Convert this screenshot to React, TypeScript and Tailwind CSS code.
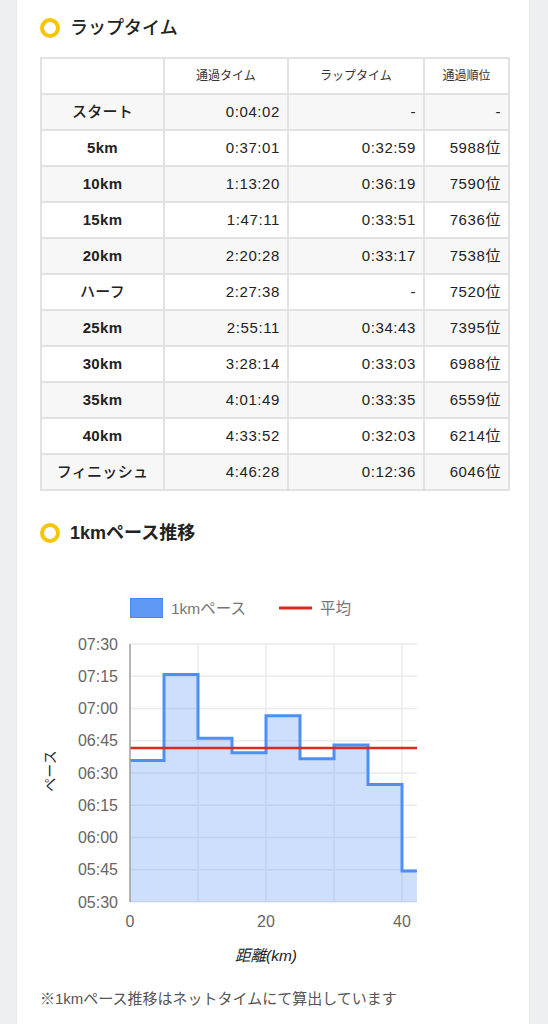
import React from 'react';

const rows: [string, string, string, string][] = [
  ['スタート', '0:04:02', '-', '-'],
  ['5km', '0:37:01', '0:32:59', '5988位'],
  ['10km', '1:13:20', '0:36:19', '7590位'],
  ['15km', '1:47:11', '0:33:51', '7636位'],
  ['20km', '2:20:28', '0:33:17', '7538位'],
  ['ハーフ', '2:27:38', '-', '7520位'],
  ['25km', '2:55:11', '0:34:43', '7395位'],
  ['30km', '3:28:14', '0:33:03', '6988位'],
  ['35km', '4:01:49', '0:33:35', '6559位'],
  ['40km', '4:33:52', '0:32:03', '6214位'],
  ['フィニッシュ', '4:46:28', '0:12:36', '6046位'],
];

// pace per km in seconds for each segment [startKm, endKm, sec]
const segments: [number, number, number][] = [
  [0, 5, 395.8],
  [5, 10, 435.8],
  [10, 15, 406.2],
  [15, 20, 399.4],
  [20, 25, 416.6],
  [25, 30, 396.6],
  [30, 35, 403],
  [35, 40, 384.6],
  [40, 42.195, 344.4],
];

const AVG = 401.6;
const X0 = 90;
const Y0 = 73;
const BOTTOM = 331;
const px = (km: number) => X0 + km * 6.8;
const py = (s: number) => Y0 + (450 - s) * 2.15;

const yTicks = ['07:30', '07:15', '07:00', '06:45', '06:30', '06:15', '06:00', '05:45', '05:30'];

function Ring() {
  return <span className="inline-block w-[20px] h-[20px] rounded-full border-[4px] border-[#f7c600] shrink-0" />;
}

function PaceChart() {
  let line = `M ${px(0)} ${py(segments[0][2])}`;
  segments.forEach(([a, b, s], i) => {
    if (i > 0) line += ` L ${px(a)} ${py(s)}`;
    line += ` L ${px(b)} ${py(s)}`;
  });
  const area = `${line} L ${px(42.195)} ${BOTTOM} L ${px(0)} ${BOTTOM} Z`;
  const font = '"Helvetica Neue", "Liberation Sans", "Noto Sans CJK JP", sans-serif';

  return (
    <svg width={468} height={400} className="block" style={{ fontFamily: font }}>
      {/* legend */}
      <rect x={90.5} y={27.5} width={32} height={19} fill="#5f97f5" stroke="#4d89ee" />
      <text x={131} y={43} fontSize={15.5} fill="#757575">1kmペース</text>
      <line x1={239} x2={272} y1={37} y2={37} stroke="#dc2a1c" strokeWidth={3} />
      <text x={280} y={43} fontSize={15.5} fill="#757575">平均</text>

      {/* grid */}
      {yTicks.map((t, i) => {
        const y = Y0 + i * 32.25;
        return (
          <g key={t}>
            <line x1={X0} x2={377} y1={y} y2={y} stroke="#ebebeb" strokeWidth={1.5} />
            <text x={78} y={y + 5.5} fontSize={16} fill="#666" textAnchor="end">{t}</text>
          </g>
        );
      })}
      {[10, 20, 30, 40].map(k => (
        <line key={k} x1={px(k)} x2={px(k)} y1={Y0} y2={BOTTOM} stroke="#ebebeb" strokeWidth={1.5} />
      ))}

      <path d={area} fill="#5b95f5" fillOpacity={0.3} />
      <path d={line} fill="none" stroke="#4d8ff4" strokeWidth={3} strokeLinejoin="miter" />
      <line x1={X0} x2={377} y1={py(AVG)} y2={py(AVG)} stroke="#dd2a1b" strokeWidth={2.5} />
      <line x1={X0} x2={X0} y1={Y0} y2={BOTTOM} stroke="#9e9e9e" strokeWidth={1.5} />

      {[0, 20, 40].map(k => (
        <text key={k} x={px(k)} y={356} fontSize={16} fill="#666" textAnchor="middle">{k}</text>
      ))}
      <text x={15} y={200} fontSize={14} fill="#222" textAnchor="middle" transform="rotate(-90 15 200)">ペース</text>
      <text x={226} y={390} fontSize={15.5} fill="#222" textAnchor="middle" fontStyle="italic">距離(km)</text>
    </svg>
  );
}

export default function App() {
  return (
    <div
      className="min-h-screen bg-[#edf0f1]"
      style={{ fontFamily: '"Helvetica Neue", "Liberation Sans", "Noto Sans CJK JP", sans-serif' }}
    >
      <div className="ml-[17px] w-[512px] bg-white pl-[23px] pr-[21px] pt-[14px] pb-[20px] min-h-[1024px] shadow-[0_0_2px_rgba(0,0,0,0.08)]">
        <h2 className="flex items-center gap-[10px] h-[28px] text-[18px] font-medium text-[#222]">
          <Ring />
          ラップタイム
        </h2>

        <table className="mt-[15px] w-[468px] table-fixed border-collapse text-[15px] text-[#222]">
          <colgroup>
            <col className="w-[123px]" />
            <col className="w-[124px]" />
            <col className="w-[136px]" />
            <col className="w-[85px]" />
          </colgroup>
          <thead>
            <tr className="h-[36px] bg-white">
              <th className="border-2 border-[#e2e2e2]" />
              <th className="border-2 border-[#e2e2e2] text-[12px] font-normal text-[#333]">通過タイム</th>
              <th className="border-2 border-[#e2e2e2] text-[12px] font-normal text-[#333]">ラップタイム</th>
              <th className="border-2 border-[#e2e2e2] text-[12px] font-normal text-[#333]">通過順位</th>
            </tr>
          </thead>
          <tbody>
            {rows.map((r, i) => (
              <tr key={r[0]} className={i % 2 === 0 ? 'h-[36px] bg-[#f7f7f7]' : 'h-[36px] bg-white'}>
                <td
                  className={
                    r[0].includes('km')
                      ? 'border-2 border-[#e2e2e2] text-center font-bold tracking-[0.3px]'
                      : 'border-2 border-[#e2e2e2] text-center font-medium tracking-[0.3px]'
                  }
                >
                  {r[0]}
                </td>
                <td className="border-2 border-[#e2e2e2] text-right pr-[7px] tracking-[0.6px]">{r[1]}</td>
                <td className="border-2 border-[#e2e2e2] text-right pr-[7px] tracking-[0.6px]">{r[2]}</td>
                <td className="border-2 border-[#e2e2e2] text-right pr-[7px] tracking-[0.6px]">{r[3]}</td>
              </tr>
            ))}
          </tbody>
        </table>

        <h2 className="mt-[28px] flex items-center gap-[10px] h-[28px] text-[18px] font-bold text-[#222]">
          <Ring />
          1kmペース推移
        </h2>

        <div className="mt-[24px]">
          <PaceChart />
        </div>

        <p className="mt-[17px] text-[15px] leading-[22px] text-[#555]">
          ※1kmペース推移はネットタイムにて算出しています
        </p>
      </div>
    </div>
  );
}
